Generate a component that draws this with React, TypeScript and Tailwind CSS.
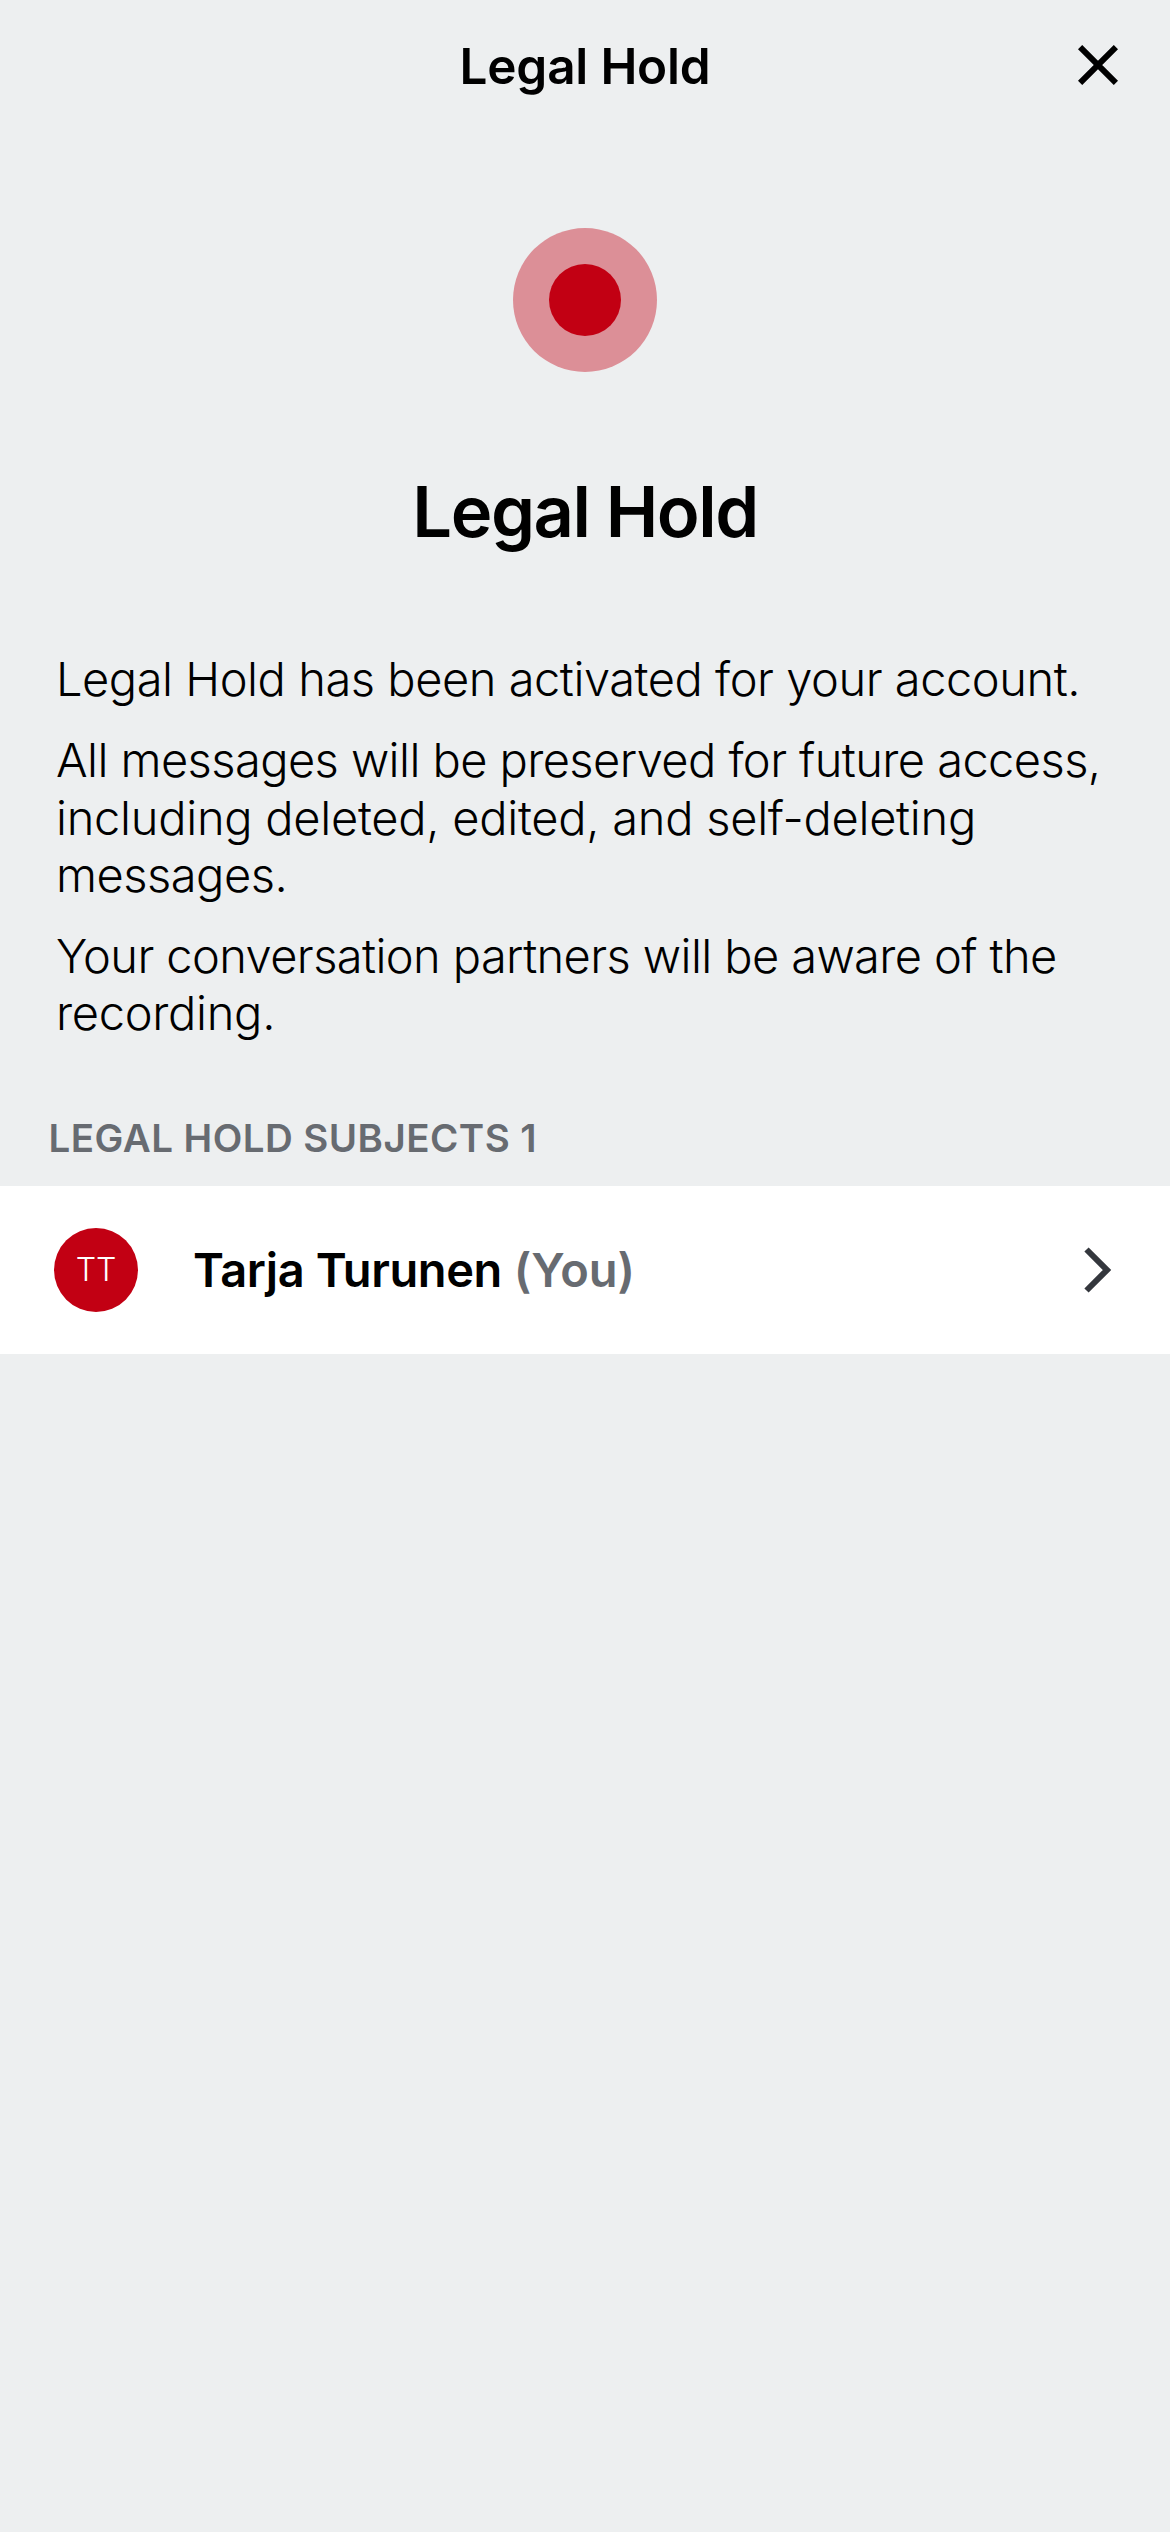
import React from "react";

const paragraphs = [
  [{ text: "Legal Hold has been activated for your account.", spacing: "tracking-[-0.46px]" }],
  [
    { text: "All messages will be preserved for future access,", spacing: "tracking-[-0.58px]" },
    { text: "including deleted, edited, and self-deleting", spacing: "tracking-[-0.27px]" },
    { text: "messages.", spacing: "tracking-[-0.5px]" },
  ],
  [
    { text: "Your conversation partners will be aware of the", spacing: "tracking-[-0.6px]" },
    { text: "recording.", spacing: "tracking-[-0.3px]" },
  ],
];

function Header() {
  return (
    <header className="grid h-[132px] grid-cols-[1fr_auto_1fr] items-center">
      <span />
      <h1 className="text-[49.5px] leading-[60px] font-semibold tracking-[-0.2px]">Legal Hold</h1>
      <button aria-label="Close" className="mr-[52px] mb-[2px] justify-self-end">
        <svg width="40" height="40" viewBox="0 0 40 40" className="block" fill="none" stroke="#000" strokeWidth="6">
          <path d="M2.1 2.1 37.9 37.9M37.9 2.1 2.1 37.9" />
        </svg>
      </button>
    </header>
  );
}

function SubjectRow() {
  return (
    <div className="flex h-[168px] items-center bg-white pl-[54px]">
      <div className="flex size-[84px] items-center justify-center rounded-full bg-[#c20013] text-[32px] leading-none font-light text-white">
        TT
      </div>
      <p className="ml-[55px] flex-1 text-[47px] leading-[60px] font-semibold whitespace-nowrap">
        <span className="tracking-[-0.4px]">Tarja Turunen</span>{" "}
        <span className="text-[#676b71]">(You)</span>
      </p>
      <svg width="28" height="46" viewBox="0 0 28 46" className="mr-[58px] block" fill="none" stroke="#34373d" strokeWidth="6">
        <path d="M2.5 2.5 23 23 2.5 43.5" />
      </svg>
    </div>
  );
}

export default function App() {
  return (
    <main className="min-h-screen w-[1170px] bg-[#edeff0] font-['Inter',sans-serif] text-black">
      <Header />
      <div className="mx-auto mt-[96px] flex size-[144px] items-center justify-center rounded-full bg-[#dc8f97]">
        <div className="size-[72px] rounded-full bg-[#c20013]" />
      </div>
      <h2 className="mt-[98px] text-center text-[70.5px] leading-[84px] font-semibold tracking-[-1.5px]">Legal Hold</h2>
      <div className="mt-[96px] flex flex-col gap-[24px] pl-[56px] text-[47px] leading-[57.25px] font-light">
        {paragraphs.map((lines) => (
          <p key={lines[0].text}>
            {lines.map((line) => (
              <span key={line.text} className={`block whitespace-nowrap ${line.spacing}`}>
                {line.text}
              </span>
            ))}
          </p>
        ))}
      </div>
      <h3 className="mt-[73.5px] mb-[25px] pl-[48.5px] text-[38.5px] leading-[46px] font-semibold tracking-[0.45px] text-[#676b71]">
        LEGAL HOLD SUBJECTS 1
      </h3>
      <SubjectRow />
    </main>
  );
}
